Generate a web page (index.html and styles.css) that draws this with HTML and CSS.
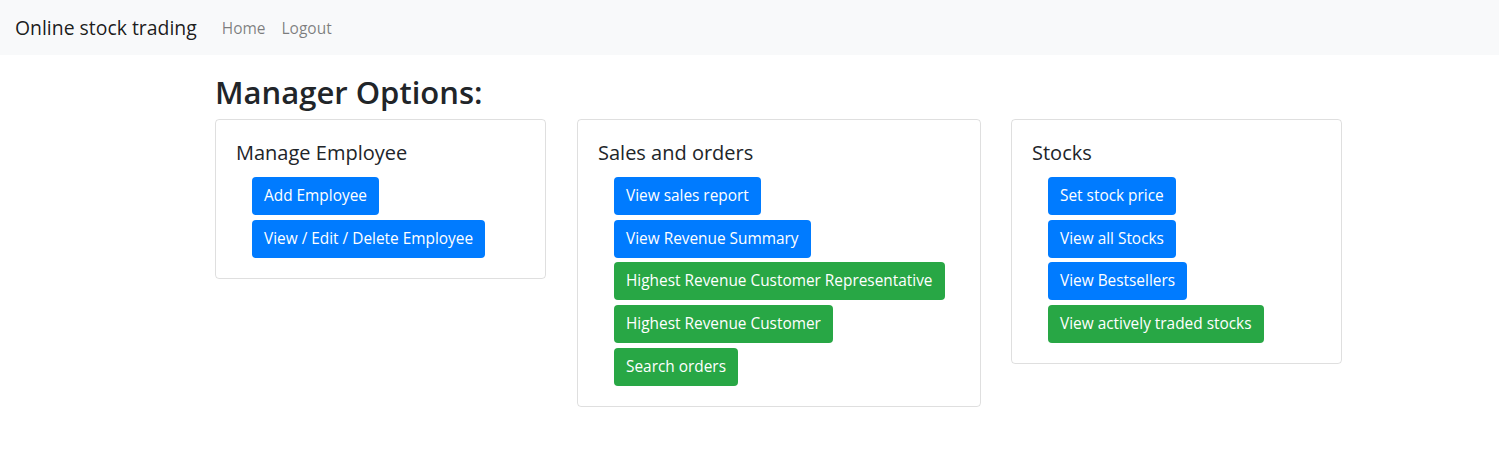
FILE: index.html
```html
<!DOCTYPE html>
<html>
<head>
<meta charset="utf-8">
<link rel="stylesheet" href="styles.css">
</head>
<body>
<nav class="navbar">
  <a class="brand" href="#">Online stock trading</a>
  <a class="nav-link" href="#">Home</a>
  <a class="nav-link" href="#">Logout</a>
</nav>
<main class="main">
  <h2 class="title">Manager Options:</h2>
  <div class="cards">
    <div class="card card-a">
      <h5 class="card-title">Manage Employee</h5>
      <div class="btns">
        <a class="btn blue" href="#">Add Employee</a>
        <a class="btn blue" href="#">View / Edit / Delete Employee</a>
      </div>
    </div>
    <div class="card card-b">
      <h5 class="card-title">Sales and orders</h5>
      <div class="btns">
        <a class="btn blue" href="#">View sales report</a>
        <a class="btn blue" href="#">View Revenue Summary</a>
        <a class="btn green" href="#">Highest Revenue Customer Representative</a>
        <a class="btn green" href="#">Highest Revenue Customer</a>
        <a class="btn green" href="#">Search orders</a>
      </div>
    </div>
    <div class="card card-c">
      <h5 class="card-title">Stocks</h5>
      <div class="btns">
        <a class="btn blue" href="#">Set stock price</a>
        <a class="btn blue" href="#">View all Stocks</a>
        <a class="btn blue" href="#">View Bestsellers</a>
        <a class="btn green" href="#">View actively traded stocks</a>
      </div>
    </div>
  </div>
</main>
</body>
</html>
```
FILE: styles.css
```css
* { box-sizing: border-box; }
body {
  margin: 0;
  font-family: "Open Sans", "Noto Sans", sans-serif;
  font-size: 16px;
  color: #212529;
  background: #fff;
}
a { text-decoration: none; }
.navbar {
  display: flex;
  align-items: center;
  height: 55px;
  padding: 0 15px;
  background: #f8f9fa;
}
.brand {
  font-size: 19.4px;
  color: rgba(0,0,0,.9);
  margin-right: 17px;
}
.nav-link {
  color: rgba(0,0,0,.5);
  padding: 0 8px;
  font-size: 15.5px;
}
.main {
  padding: 18px 0 0 215px;
}
.title {
  margin: 0 0 8px;
  font-size: 31px;
  font-weight: 600;
  line-height: 38px;
}
.cards {
  display: flex;
  align-items: flex-start;
  gap: 31px;
}
.card {
  border: 1px solid rgba(0,0,0,.125);
  border-radius: 4px;
  padding: 21px 20px 20px;
}
.card-a { width: 331px; }
.card-b { width: 404px; margin-right: -1px; }
.card-c { width: 331px; }
.card-title {
  margin: 0 0 12px;
  font-size: 20px;
  font-weight: 500;
  line-height: 24px;
}
.btns {
  display: flex;
  flex-direction: column;
  align-items: flex-start;
  gap: 4.7px;
  padding-left: 16px;
}
.btn {
  display: inline-block;
  height: 38px;
  line-height: 24px;
  padding: 7px 12px 5px;
  border-radius: 4px;
  color: #fff;
  font-size: 15.4px;
  white-space: nowrap;
}
.blue { background: #007bff; }
.green { background: #28a745; }
```
